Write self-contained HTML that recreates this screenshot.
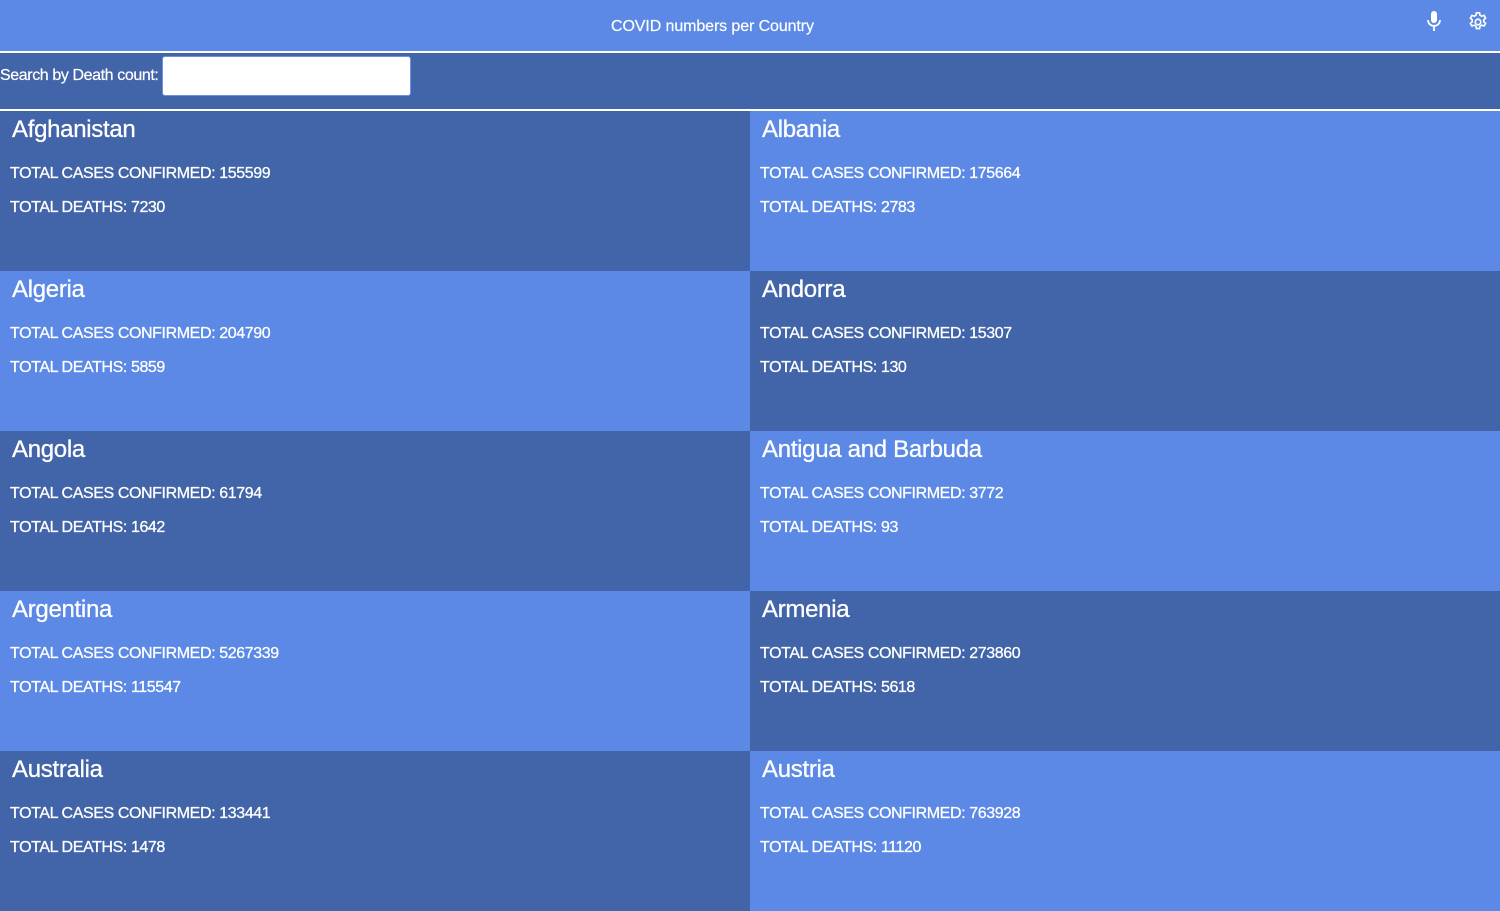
<!DOCTYPE html>
<html><head><style>
body{margin:0;width:1500px;height:900px;overflow:hidden;background:#5b89e5;font-family:"Liberation Sans",sans-serif;color:#fff}
.hdr{height:51px;background:#5b89e5;position:relative;font-size:16px;border-bottom:2px solid #fff}
.hdr .t{position:absolute;left:611px;top:18px;letter-spacing:-0.1px;-webkit-text-stroke:0.2px #fff}
.sb{height:56px;background:#4264a8;border-bottom:2px solid #fff;display:flex;align-items:flex-start;font-size:16px;letter-spacing:-0.4px}
.sb span{margin-top:14px;-webkit-text-stroke:0.2px #fff}
.sb input{margin-left:4px;margin-top:3px;width:249px;height:40px;border:1px solid #6b93e0;border-radius:3px;background:#fff;box-sizing:border-box}
.grid{display:grid;grid-template-columns:750px 750px}
.c{height:160px;box-sizing:border-box;padding-left:10px}
.d{background:#4264a8}.l{background:#5b89e5}
.c h2{margin:0;padding:6px 0 0 2px;font-size:24px;font-weight:normal;letter-spacing:-0.3px;line-height:26px;-webkit-text-stroke:0.3px #fff}
.c p{margin:0;font-size:16px;letter-spacing:-0.4px;-webkit-text-stroke:0.3px #fff}
.p1{padding-top:22px}.p2{padding-top:16px}
</style></head><body>
<div class="hdr"><span class="t">COVID numbers per Country</span>
<svg style="position:absolute;left:1424px;top:10px" width="20" height="24" viewBox="0 0 20 24"><rect x="7" y="1" width="6" height="12" rx="3" fill="#fff"/><path d="M4 10a6 6 0 0 0 12 0M10 16v5" stroke="#fff" stroke-width="1.8" fill="none"/></svg>
<svg style="position:absolute;left:1467px;top:11px" width="22" height="22" viewBox="0 0 24 24"><path fill="none" stroke="#fff" stroke-width="1.8" d="M10.3 2h3.4l.5 2.6 1.9 1.1 2.5-.9 1.7 2.9-2 1.8v2.2l2 1.8-1.7 2.9-2.5-.9-1.9 1.1-.5 2.6h-3.4l-.5-2.6-1.9-1.1-2.5.9-1.7-2.9 2-1.8v-2.2l-2-1.8 1.7-2.9 2.5.9 1.9-1.1z"/><circle cx="12" cy="12" r="3" fill="none" stroke="#fff" stroke-width="1.8"/></svg>
</div>
<div class="sb"><span>Search by Death count:</span><input></div>
<div class="grid">
<div class="c d"><h2>Afghanistan</h2><p class="p1">TOTAL CASES CONFIRMED: 155599</p><p class="p2">TOTAL DEATHS: 7230</p></div>
<div class="c l"><h2>Albania</h2><p class="p1">TOTAL CASES CONFIRMED: 175664</p><p class="p2">TOTAL DEATHS: 2783</p></div>
<div class="c l"><h2>Algeria</h2><p class="p1">TOTAL CASES CONFIRMED: 204790</p><p class="p2">TOTAL DEATHS: 5859</p></div>
<div class="c d"><h2>Andorra</h2><p class="p1">TOTAL CASES CONFIRMED: 15307</p><p class="p2">TOTAL DEATHS: 130</p></div>
<div class="c d"><h2>Angola</h2><p class="p1">TOTAL CASES CONFIRMED: 61794</p><p class="p2">TOTAL DEATHS: 1642</p></div>
<div class="c l"><h2>Antigua and Barbuda</h2><p class="p1">TOTAL CASES CONFIRMED: 3772</p><p class="p2">TOTAL DEATHS: 93</p></div>
<div class="c l"><h2>Argentina</h2><p class="p1">TOTAL CASES CONFIRMED: 5267339</p><p class="p2">TOTAL DEATHS: 115547</p></div>
<div class="c d"><h2>Armenia</h2><p class="p1">TOTAL CASES CONFIRMED: 273860</p><p class="p2">TOTAL DEATHS: 5618</p></div>
<div class="c d"><h2>Australia</h2><p class="p1">TOTAL CASES CONFIRMED: 133441</p><p class="p2">TOTAL DEATHS: 1478</p></div>
<div class="c l"><h2>Austria</h2><p class="p1">TOTAL CASES CONFIRMED: 763928</p><p class="p2">TOTAL DEATHS: 11120</p></div>
</div>
</body></html>
